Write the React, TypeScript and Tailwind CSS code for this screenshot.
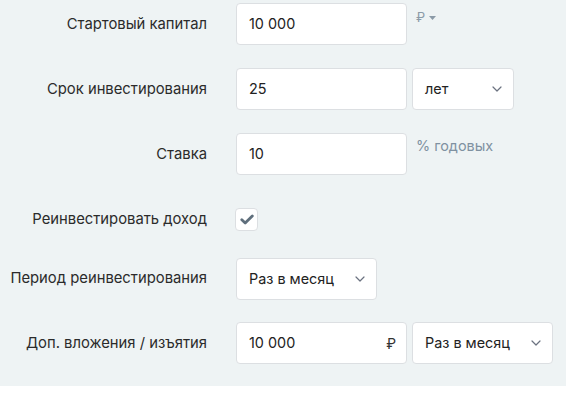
import React from "react";

const Chevron = () => (
  <svg width="10" height="6" viewBox="0 0 10 6" fill="none" className="shrink-0">
    <path d="M1 1l4 4 4-4" stroke="#6b7280" strokeWidth="1.2" strokeLinecap="round" strokeLinejoin="round" />
  </svg>
);

const Label = ({ children }: { children: React.ReactNode }) => (
  <div className="w-[207px] shrink-0 text-right text-[14.8px] text-[#2b2b2b]">{children}</div>
);

const inputCls =
  "h-[42px] bg-white border border-[#dcdfe2] rounded-[4px] flex items-center px-3 text-[14.4px] text-[#222]";

export default function App() {
  return (
    <div className="w-[574px] h-[395px] bg-white" style={{ fontFamily: "Inter, 'Noto Sans', sans-serif" }}>
      <div className="w-[566px] h-[386px] bg-[#eef3f4] pt-[3px]">
        {/* Row 1 */}
        <div className="flex items-center h-[42px]">
          <Label>Стартовый капитал</Label>
          <div className={`${inputCls} ml-[29px] w-[171px]`}>10 000</div>
          <div className="self-start ml-[9px] mt-[5px] flex items-center gap-[4px] text-[13px] text-[#8b9aa7]">
            <span>₽</span>
            <svg width="7" height="4" viewBox="0 0 7 4"><path d="M0 0h7L3.5 4z" fill="#8b9aa7" /></svg>
          </div>
        </div>
        {/* Row 2 */}
        <div className="flex items-center h-[42px] mt-[23px]">
          <Label>Срок инвестирования</Label>
          <div className={`${inputCls} ml-[29px] w-[171px]`}>25</div>
          <div className={`${inputCls} ml-[5px] w-[102px] justify-between pr-[11px]`}>
            <span>лет</span>
            <Chevron />
          </div>
        </div>
        {/* Row 3 */}
        <div className="flex items-center h-[42px] mt-[23px]">
          <Label>Ставка</Label>
          <div className={`${inputCls} ml-[29px] w-[171px]`}>10</div>
          <div className="self-start ml-[9px] mt-[2px] text-[14.4px] text-[#7f91a1]">% годовых</div>
        </div>
        {/* Row 4 */}
        <div className="flex items-center h-[42px] mt-[23px]">
          <Label>Реинвестировать доход</Label>
          <div className="ml-[28px] w-[23px] h-[23px] bg-white border border-[#dcdfe2] rounded-[4px] flex items-center justify-center">
            <svg width="14" height="11" viewBox="0 0 14 11">
              <path d="M1.8 5.8l3.4 3.2L12.3 2" stroke="#5f6f7c" strokeWidth="2.8" fill="none" strokeLinecap="round" strokeLinejoin="round" />
            </svg>
          </div>
        </div>
        {/* Row 5 */}
        <div className="flex items-center h-[41px] mt-[18px]">
          <Label>Период реинвестирования</Label>
          <div className={`${inputCls} h-[41px] ml-[29px] w-[141px] justify-between pr-[11px]`}>
            <span>Раз в месяц</span>
            <Chevron />
          </div>
        </div>
        {/* Row 6 */}
        <div className="flex items-center h-[42px] mt-[23px]">
          <Label>Доп. вложения / изъятия</Label>
          <div className={`${inputCls} ml-[29px] w-[171px] justify-between pr-[10px]`}>
            <span>10 000</span>
            <span className="text-[14px] text-[#333]">₽</span>
          </div>
          <div className={`${inputCls} ml-[5px] w-[141px] justify-between pr-[11px]`}>
            <span>Раз в месяц</span>
            <Chevron />
          </div>
        </div>
      </div>
    </div>
  );
}
